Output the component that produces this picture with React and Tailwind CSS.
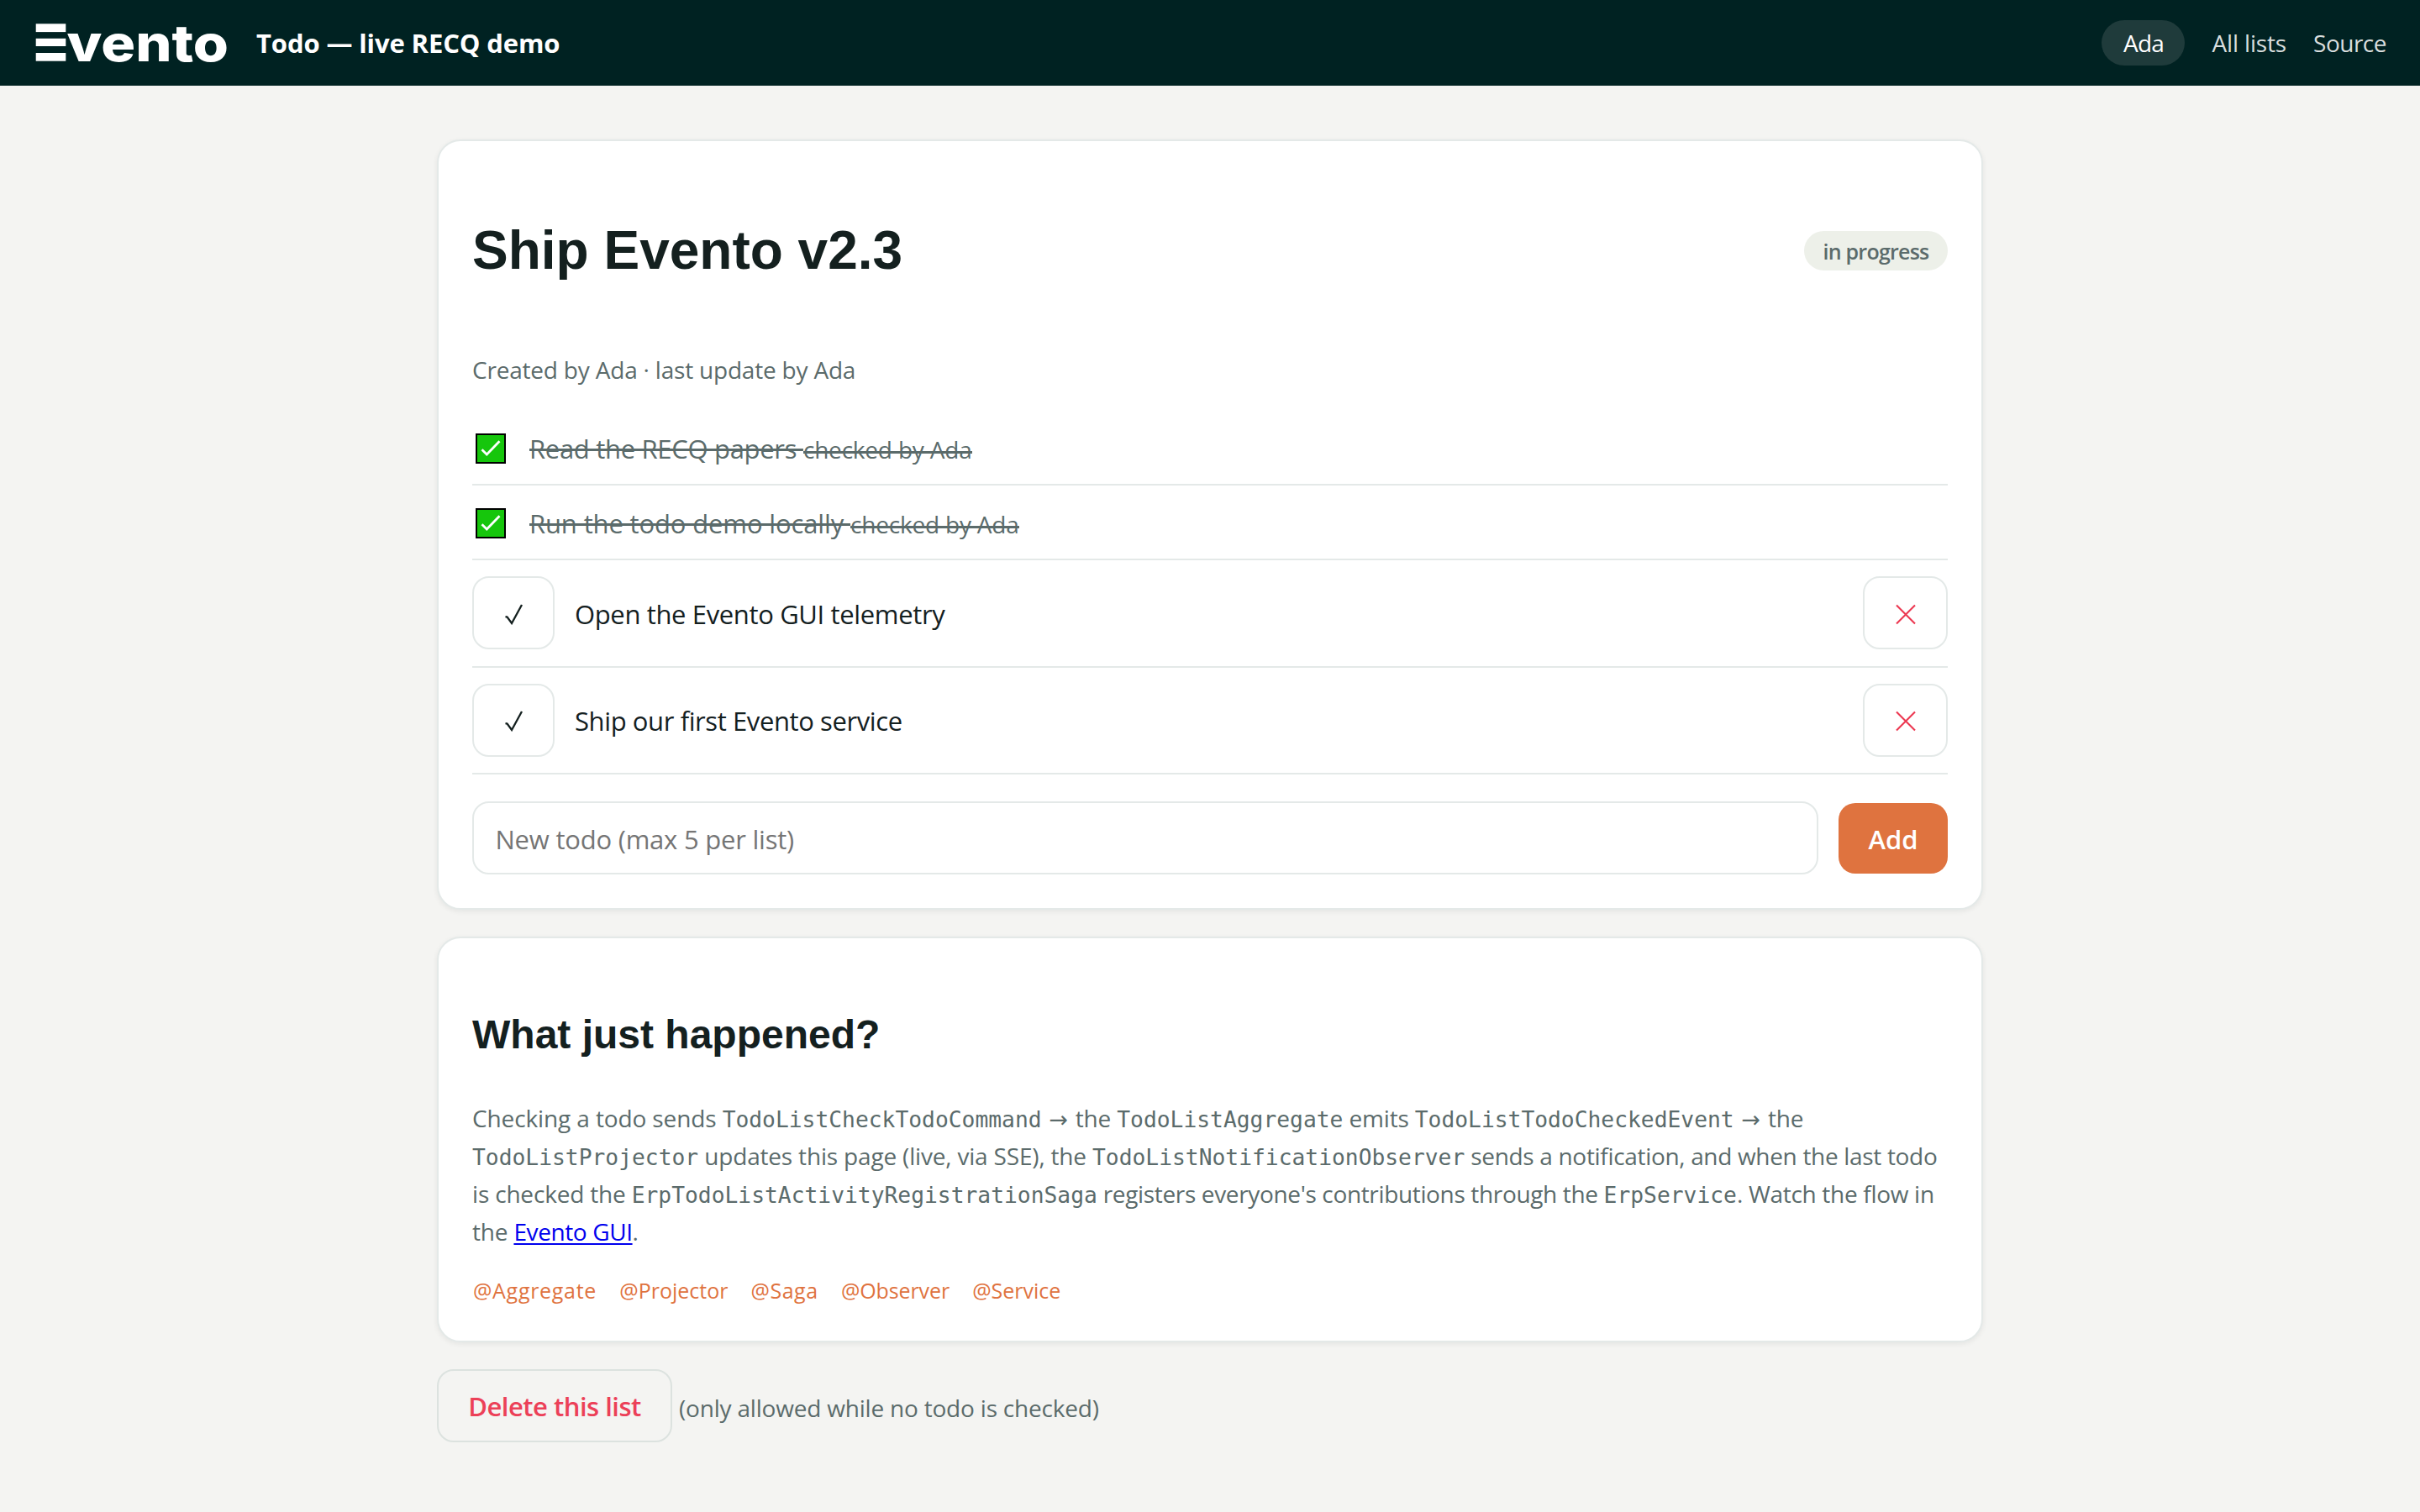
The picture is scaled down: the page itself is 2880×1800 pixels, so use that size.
import React, { useState } from "react";

const initialTodos = [
  { id: 1, text: "Read the RECQ papers", checkedBy: "Ada", spacing: "tracking-[-0.31px]" },
  { id: 2, text: "Run the todo demo locally", checkedBy: "Ada", spacing: "tracking-[-0.14px]" },
  { id: 3, text: "Open the Evento GUI telemetry", spacing: "tracking-[-0.36px]" },
  { id: 4, text: "Ship our first Evento service", spacing: "tracking-[-0.4px]" },
];

const tags = [
  { name: "@Aggregate", width: "w-[147px]", spacing: "tracking-[0.7px]" },
  { name: "@Projector", width: "w-[129px]", spacing: "tracking-normal" },
  { name: "@Saga", width: "w-[80px]", spacing: "tracking-[0.5px]" },
  { name: "@Observer", width: "w-[129px]", spacing: "tracking-[-0.1px]" },
  { name: "@Service", width: "w-[105px]", spacing: "tracking-normal" },
];

function Logo() {
  return (
    <svg width="236" height="90" viewBox="0 -17 236 90" fill="#fff" aria-label="Evento">
      <rect x="0.7" y="5.3" width="35.6" height="9.8" />
      <rect x="0.7" y="22.8" width="35.6" height="9.2" />
      <rect x="0.7" y="40" width="35.6" height="9.7" />
      <text
        x="37.5"
        y="49.7"
        fontFamily="Inter, sans-serif"
        fontWeight="800"
        fontSize="60.5"
        textLength="192.5"
        lengthAdjust="spacingAndGlyphs"
      >
        vento
      </text>
    </svg>
  );
}

function Header() {
  return (
    <header className="flex h-[102px] items-center bg-[#002222] pr-10 pl-[42px]">
      <Logo />
      <span className="ml-[27px] pt-px text-[31px] leading-none font-bold tracking-[-0.12px] text-white">
        Todo — live RECQ demo
      </span>
      <nav className="ml-auto flex items-center gap-8 text-[28px] leading-none text-[#d9dede]">
        <span className="flex h-[54px] w-[99px] items-center justify-center rounded-full bg-[#1f3b3b] tracking-[-0.9px] text-white">
          Ada
        </span>
        <a className="tracking-[-0.15px]">All lists</a>
        <a className="tracking-[-0.5px]">Source</a>
      </nav>
    </header>
  );
}

function Card({ className, children }) {
  return (
    <section
      className={`rounded-[28px] border-2 border-[#e4e9e8] bg-white p-10 shadow-[0_2px_6px_rgba(0,34,34,0.07)] ${className}`}
    >
      {children}
    </section>
  );
}

function CheckedBox() {
  return (
    <svg className="ml-1 shrink-0" width="36" height="36" viewBox="0 0 36 36" fill="none">
      <rect x="1" y="1" width="34" height="34" fill="#16c60c" stroke="#000" strokeWidth="2" />
      <path d="M7.5 19.2 L13.3 25 L28.5 9.3" stroke="#fff" strokeWidth="2.8" />
    </svg>
  );
}

function TodoRow({ todo, onCheck, onRemove }) {
  if (todo.checkedBy) {
    return (
      <li className="flex h-[89px] items-center gap-7 border-b-2 border-[#e4e9e8] pt-[3px] text-[#5b6b6b]">
        <CheckedBox />
        <span className="pt-px leading-[48px] whitespace-pre">
          <span className={`line-through decoration-[3px] ${todo.spacing}`}>{todo.text + " "}</span>
          {/* the small label has its own, lower strike */}
          <span className="relative inline-block text-[28px] tracking-[-0.2px] after:absolute after:inset-x-0 after:top-[26px] after:h-[3px] after:bg-[#5b6b6b]">
            checked by {todo.checkedBy}
          </span>
        </span>
      </li>
    );
  }

  return (
    <li className="flex h-[127.5px] items-center gap-6 border-b-2 border-[#e4e9e8]">
      <button
        onClick={() => onCheck(todo.id)}
        className="flex h-[87px] w-[98px] items-center justify-center rounded-[20px] border-2 border-[#e4e9e8]"
      >
        <svg width="28" height="28" viewBox="0 0 28 28" fill="none" stroke="#14201f" strokeWidth="2.3">
          <path d="M4.5 18.2 L6.6 18.6 L12 26 L24 4" />
        </svg>
      </button>
      <span className={`pt-0.5 leading-[48px] ${todo.spacing}`}>{todo.text}</span>
      <button
        onClick={() => onRemove(todo.id)}
        className="ml-auto flex h-[87px] w-[101px] items-center justify-center rounded-[20px] border-2 border-[#e4e9e8]"
      >
        <svg width="28" height="28" viewBox="0 0 28 28" fill="none" stroke="#ec3750" strokeWidth="2.1">
          <path d="M3 4.5 L25 26.5 M25 4.5 L3 26.5" />
        </svg>
      </button>
    </li>
  );
}

function Code({ children }) {
  return (
    <code className="font-['DejaVu_Sans_Mono',monospace] text-[26.3px] leading-none tracking-normal">
      {children}
    </code>
  );
}

function Arrow() {
  return (
    <span className="inline-flex w-[26px] justify-center font-['DejaVu_Sans',sans-serif] text-[27px] leading-none tracking-normal">
      →
    </span>
  );
}

function App() {
  const [todos, setTodos] = useState(initialTodos);
  const [draft, setDraft] = useState("");

  const checkTodo = (id) => {
    setTodos(todos.map((t) => (t.id === id ? { ...t, checkedBy: "Ada" } : t)));
  };

  const removeTodo = (id) => {
    setTodos(todos.filter((t) => t.id !== id));
  };

  const addTodo = () => {
    if (!draft || todos.length >= 5) return;
    setTodos([...todos, { id: Date.now(), text: draft, spacing: "tracking-[-0.3px]" }]);
    setDraft("");
  };

  return (
    <div className="min-h-screen bg-[#f4f4f2] font-['Open_Sans','Noto_Sans',sans-serif] text-[31px] text-[#14201f]">
      <Header />

      <main className="mx-auto w-[1840px] pt-16">
        <Card>
          <div className="flex h-[180px] items-center justify-between">
            <h1 className="font-['Liberation_Sans',Arial,sans-serif] text-[64px] leading-none font-bold tracking-normal">
              Ship Evento v2.3
            </h1>
            <span className="flex h-[47px] w-[171px] items-center justify-center rounded-full bg-[#edf0e9] pt-0.5 text-[25px] leading-none font-semibold tracking-[-0.75px] text-[#5b6b6b]">
              in progress
            </span>
          </div>

          <p className="mt-[30px] text-[28px] leading-[45px] tracking-[-0.2px] text-[#5b6b6b]">
            Created by Ada · last update by Ada
          </p>

          <ul className="mt-[26px]">
            {todos.map((todo) => (
              <TodoRow key={todo.id} todo={todo} onCheck={checkTodo} onRemove={removeTodo} />
            ))}
          </ul>

          <div className="mt-8 flex items-center gap-6">
            <input
              value={draft}
              onChange={(e) => setDraft(e.target.value)}
              placeholder="New todo (max 5 per list)"
              className="h-[87px] flex-1 rounded-[20px] border-2 border-[#e4e9e8] px-[25.5px] pt-0.5 tracking-[-0.22px] placeholder:text-[#757575]"
            />
            <button
              onClick={addTodo}
              className="flex h-[84px] w-[130px] items-center justify-center rounded-[20px] bg-[#df733f] pt-[3px] leading-none font-semibold text-white"
            >
              Add
            </button>
          </div>
        </Card>

        <Card className="mt-8">
          <h2 className="mt-[39px] font-['Liberation_Sans',Arial,sans-serif] text-[48px] leading-[72px] font-bold">
            What just happened?
          </h2>

          <p className="mt-[41px] text-[28px] leading-[45px] tracking-[-0.18px] whitespace-nowrap text-[#5b6b6b]">
            <span className="tracking-[-0.12px]">Checking a todo sends </span>
            <Code>TodoListCheckTodoCommand</Code> <Arrow /> the <Code>TodoListAggregate</Code> emits{" "}
            <Code>TodoListTodoCheckedEvent</Code> <Arrow /> the
            <br />
            <Code>TodoListProjector</Code> updates this page (live, via SSE), the{" "}
            <Code>TodoListNotificationObserver</Code>
            <span className="tracking-[-0.32px]"> sends a notification, and when the last todo</span>
            <br />
            is checked the <Code>ErpTodoListActivityRegistrationSaga</Code>
            <span className="tracking-[-0.35px]"> registers everyone's contributions through the </span>
            <Code>ErpService</Code>
            <span className="tracking-[-0.3px]">. Watch the flow in</span>
            <br />
            the{" "}
            <a className="tracking-[-0.4px] text-[#0000ee] underline decoration-2 underline-offset-[3px]">
              Evento GUI
            </a>
            .
          </p>

          <div className="mt-[27px] flex gap-[27.3px] pl-px text-[25px] leading-[40px] text-[#df733f]">
            {tags.map((tag) => (
              <span key={tag.name} className={`${tag.width} ${tag.spacing}`}>
                {tag.name}
              </span>
            ))}
          </div>
        </Card>

        <div className="mt-8 flex items-center gap-2">
          <button className="flex h-[87px] w-[280px] items-center justify-center rounded-[20px] border-2 border-[#dce2df] pt-px leading-none font-semibold tracking-[-0.5px] text-[#ec4058]">
            Delete this list
          </button>
          <span className="pt-[5px] text-[28px] leading-[45px] tracking-[-0.2px] text-[#5b6b6b]">
            (only allowed while no todo is checked)
          </span>
        </div>
      </main>
    </div>
  );
}

export default App;
